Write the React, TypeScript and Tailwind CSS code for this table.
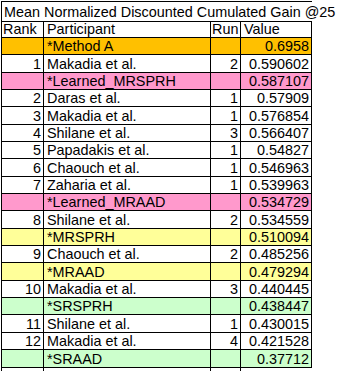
const rows = [
  { rank: "", name: "*Method A", run: "", value: "0.6958", bg: "bg-[#ffc000]" },
  { rank: "1", name: "Makadia et al.", run: "2", value: "0.590602", bg: "bg-white" },
  { rank: "", name: "*Learned_MRSPRH", run: "", value: "0.587107", bg: "bg-[#ff99cc]" },
  { rank: "2", name: "Daras et al.", run: "1", value: "0.57909", bg: "bg-white" },
  { rank: "3", name: "Makadia et al.", run: "1", value: "0.576854", bg: "bg-white" },
  { rank: "4", name: "Shilane et al.", run: "3", value: "0.566407", bg: "bg-white" },
  { rank: "5", name: "Papadakis et al.", run: "1", value: "0.54827", bg: "bg-white" },
  { rank: "6", name: "Chaouch et al.", run: "1", value: "0.546963", bg: "bg-white" },
  { rank: "7", name: "Zaharia et al.", run: "1", value: "0.539963", bg: "bg-white" },
  { rank: "", name: "*Learned_MRAAD", run: "", value: "0.534729", bg: "bg-[#ff99cc]" },
  { rank: "8", name: "Shilane et al.", run: "2", value: "0.534559", bg: "bg-white" },
  { rank: "", name: "*MRSPRH", run: "", value: "0.510094", bg: "bg-[#ffff99]" },
  { rank: "9", name: "Chaouch et al.", run: "2", value: "0.485256", bg: "bg-white" },
  { rank: "", name: "*MRAAD", run: "", value: "0.479294", bg: "bg-[#ffff99]" },
  { rank: "10", name: "Makadia et al.", run: "3", value: "0.440445", bg: "bg-white" },
  { rank: "", name: "*SRSPRH", run: "", value: "0.438447", bg: "bg-[#ccffcc]" },
  { rank: "11", name: "Shilane et al.", run: "1", value: "0.430015", bg: "bg-white" },
  { rank: "12", name: "Makadia et al.", run: "4", value: "0.421528", bg: "bg-white" },
  { rank: "", name: "*SRAAD", run: "", value: "0.37712", bg: "bg-[#ccffcc]" },
];

const cols = "grid grid-cols-[42px_167px_30px_71px] border-b border-black";
const cell = "border-r border-black flex items-end pb-[1px] leading-none whitespace-nowrap overflow-hidden";

export default function App() {
  return (
    <div className="w-[343px] h-[371px] overflow-hidden bg-white pl-[1px] pt-[1px] font-['Liberation_Sans',Arial,sans-serif] text-[14.4px] text-black">
      <div className="w-[311px] border-l border-black">
        <div className="h-[21px] border-t border-b border-black flex items-end pb-[2px] pl-[2px] whitespace-nowrap leading-none">
          Mean Normalized Discounted Cumulated Gain @25
        </div>
        <div className={`${cols} h-[16px]`}>
          <div className={`${cell} pl-[1px]`}>Rank</div>
          <div className={`${cell} pl-[3px]`}>Participant</div>
          <div className={`${cell} pl-[1px]`}>Run</div>
          <div className={`${cell} pl-[3px]`}>Value</div>
        </div>
        {rows.map((r, i) => (
          <div key={i} className={`${cols} ${r.bg} ${i % 3 === 1 || i === 18 ? "h-[18px]" : "h-[17px]"}`}>
            <div className={`${cell} justify-end pr-[2px]`}>{r.rank}</div>
            <div className={`${cell} pl-[3px]`}>{r.name}</div>
            <div className={`${cell} justify-end pr-[2px]`}>{r.run}</div>
            <div className={`${cell} justify-end pr-[2px]`}>{r.value}</div>
          </div>
        ))}
        <div className="grid grid-cols-[42px_167px_30px_71px] h-[17px]">
          <div className="border-r border-black" />
          <div className="border-r border-black" />
          <div className="border-r border-black" />
          <div />
        </div>
      </div>
    </div>
  );
}
